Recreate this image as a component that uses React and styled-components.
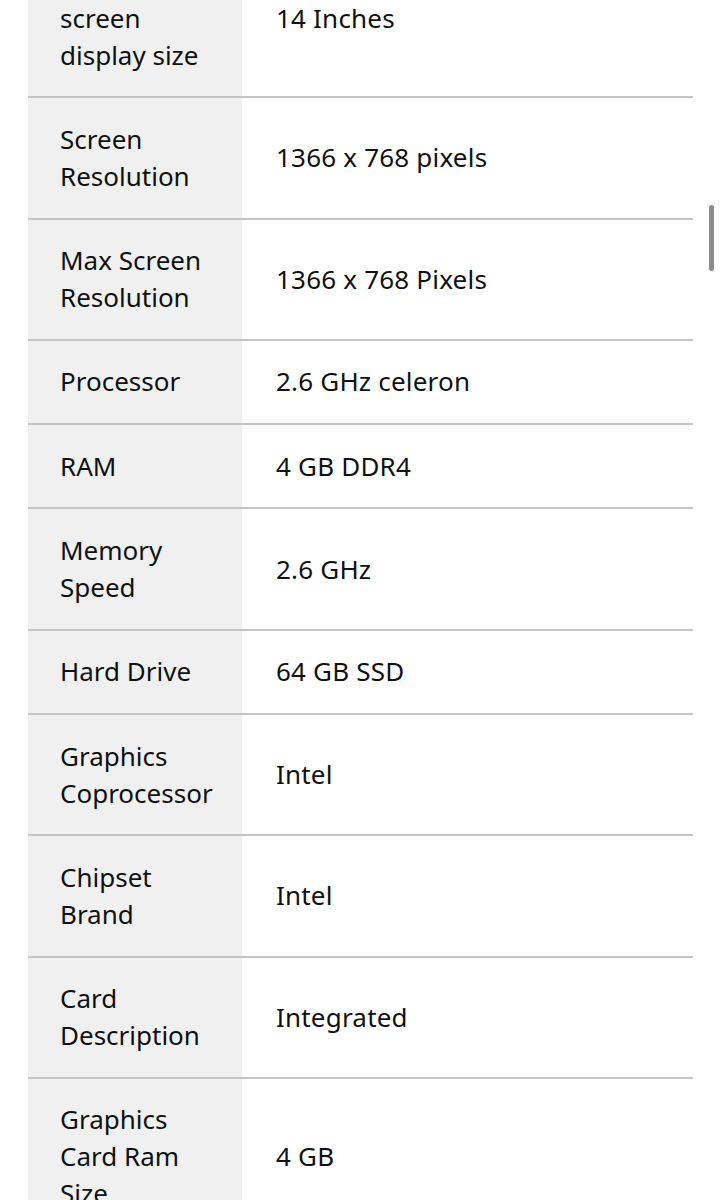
import React from "react";
import styled, { createGlobalStyle } from "styled-components";

const Global = createGlobalStyle`
  html, body {
    margin: 0;
    padding: 0;
    background: #fff;
    overflow: hidden;
  }
  body {
    font-family: "Noto Sans", "Open Sans", Arial, sans-serif;
    color: #0f1111;
  }
`;

const specs = [
  ["Standing screen display size", "14 Inches"],
  ["Screen Resolution", "1366 x 768 pixels"],
  ["Max Screen Resolution", "1366 x 768 Pixels"],
  ["Processor", "2.6 GHz celeron"],
  ["RAM", "4 GB DDR4"],
  ["Memory Speed", "2.6 GHz"],
  ["Hard Drive", "64 GB SSD"],
  ["Graphics Coprocessor", "Intel"],
  ["Chipset Brand", "Intel"],
  ["Card Description", "Integrated"],
  ["Graphics Card Ram Size", "4 GB"],
];

const Page = styled.div`
  height: 1200px;
  overflow: hidden;
  padding: 0 28px;
`;

const Table = styled.div`
  margin-top: -60px;
  width: 665px;
`;

const Row = styled.div`
  display: grid;
  grid-template-columns: 214px 1fr;
  border-bottom: 2px solid #c4c4c4;
`;

const Label = styled.div`
  background: #f0f0f0;
  padding: 22.65px 20px 22.65px 32px;
  font-size: 26px;
  line-height: 37px;
`;

const Value = styled.div`
  display: flex;
  align-items: center;
  padding: 0 20px 0 34px;
  font-size: 26px;
  line-height: 37px;
  letter-spacing: 0.2px;
`;

const Scrollbar = styled.div`
  position: fixed;
  top: 205px;
  right: 7px;
  width: 5px;
  height: 66px;
  border-radius: 3px;
  background: #8c8c8c;
`;

export default function App() {
  return (
    <Page>
      <Global />
      <Table>
        {specs.map(([label, value]) => (
          <Row key={label}>
            <Label>{label}</Label>
            <Value>{value}</Value>
          </Row>
        ))}
      </Table>
      <Scrollbar />
    </Page>
  );
}
